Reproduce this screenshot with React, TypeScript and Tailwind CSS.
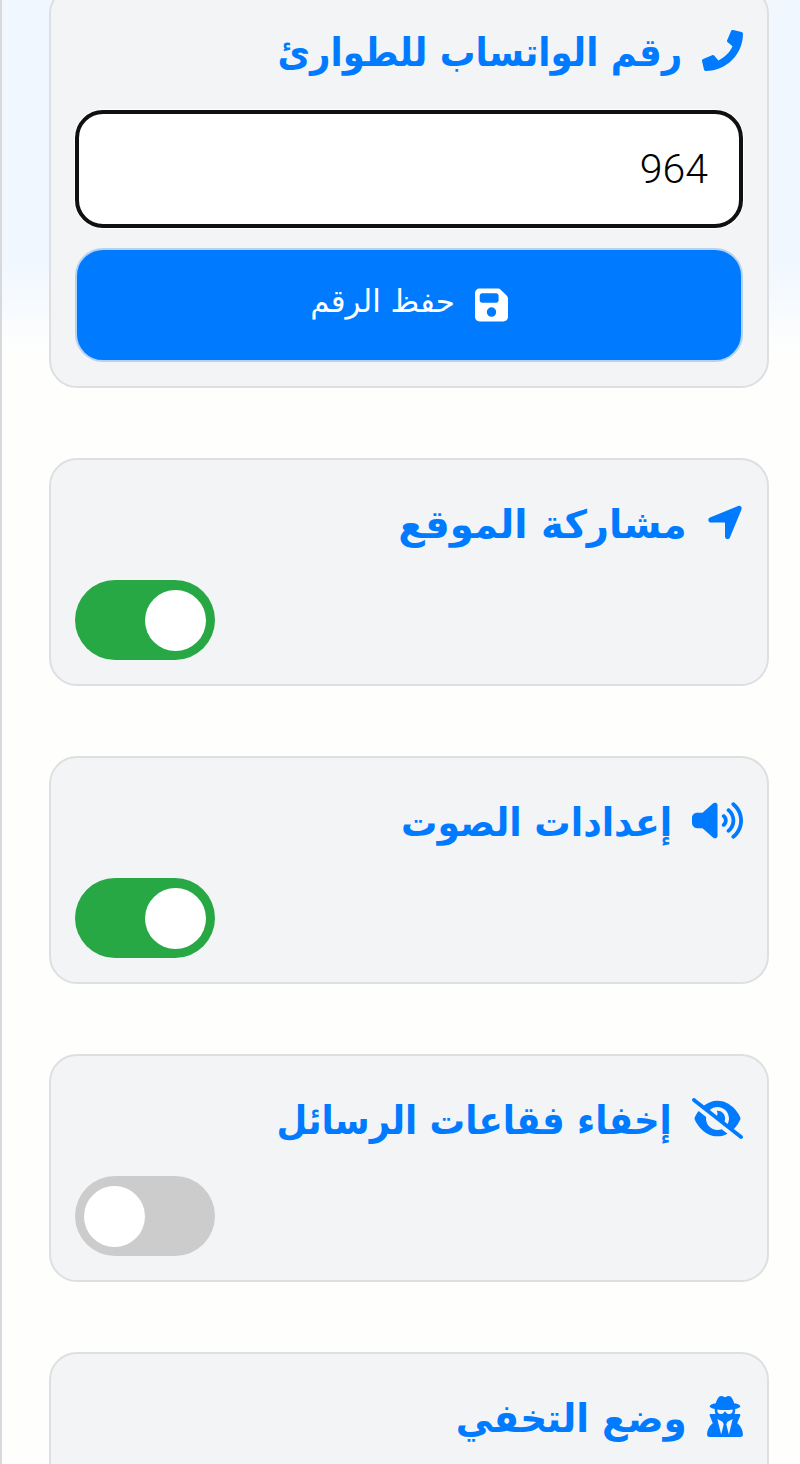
import { useState } from 'react'
import type { ReactNode } from 'react'
import clsx from 'clsx'
import { FaPhone } from 'react-icons/fa'
import { FaFloppyDisk, FaLocationArrow, FaUserSecret, FaVolumeHigh } from 'react-icons/fa6'

// eye-slash with the larger pupil
function EyeSlash({ className }: { className?: string }) {
  return (
    <svg viewBox="0 0 640 512" fill="currentColor" className={className}>
      <path d="M150.7 92.77C195 58.27 251.8 32 320 32C400.8 32 465.5 68.84 512.6 112.6C559.4 156 590.7 207.1 605.5 243.7C608.8 251.6 608.8 260.4 605.5 268.3C592.1 300.6 565.2 346.1 525.6 386.7L630.8 469.1C641.2 477.3 643.1 492.4 634.9 502.8C626.7 513.2 611.6 515.1 601.2 506.9L9.196 42.89C-1.236 34.71-3.065 19.63 5.112 9.196C13.29-1.236 28.37-3.065 38.81 5.112L150.7 92.77zM223.1 149.5L313.4 220.3C317.6 211.8 320 202.2 320 192C320 180.5 316.1 169.7 311.6 160.4C314.4 160.1 317.2 160 320 160C373 160 416 203 416 256C416 269.7 413.1 281.7 408.1 293.3L446.6 324.1C457.7 304.3 464 280.9 464 256C464 176.5 399.5 112 320 112C282.7 112 248.6 126.2 223.1 149.5zM320 480C239.2 480 174.5 443.2 127.4 399.4C80.62 356 49.34 304.9 34.46 268.3C31.18 260.4 31.18 251.6 34.46 243.7C44 220.8 60.29 191.2 83.09 161.5L177.4 235.8C176.5 242.4 176 249.1 176 256C176 335.5 240.5 400 320 400C338.7 400 356.6 396.4 373 389.9L446.2 447.5C409.9 467.1 367.8 480 320 480z" />
    </svg>
  )
}

const toggles = [
  {
    id: 'location',
    label: 'مشاركة الموقع',
    icon: <FaLocationArrow className="h-[41px] w-9" />,
    on: true,
    fit: 'scale-x-[0.989]',
  },
  {
    id: 'sound',
    label: 'إعدادات الصوت',
    icon: <FaVolumeHigh className="h-[41px] w-[51px]" />,
    on: true,
    fit: 'scale-x-[0.928]',
  },
  {
    id: 'bubbles',
    label: 'إخفاء فقاعات الرسائل',
    icon: <EyeSlash className="h-[41px] w-[51px]" />,
    on: false,
    fit: 'scale-x-[0.909]',
  },
  {
    id: 'stealth',
    label: 'وضع التخفي',
    icon: <FaUserSecret className="h-[41px] w-9" />,
    on: false,
    fit: 'scale-x-[0.956]',
  },
]

function Card({ children }: { children: ReactNode }) {
  return (
    <section className="shrink-0 rounded-[28px] border-2 border-[#dedfe0] bg-[#f2f4f6] p-6">{children}</section>
  )
}

function Title({ icon, label, fit }: { icon: ReactNode; label: string; fit: string }) {
  return (
    <h2 className="flex h-20 items-center gap-5 text-[39px] font-bold text-[#007bff]">
      <span className="-mt-[3px] shrink-0">{icon}</span>
      <span className={clsx('origin-right leading-none whitespace-nowrap', fit)}>{label}</span>
    </h2>
  )
}

function Toggle({ on, onClick }: { on: boolean; onClick: () => void }) {
  return (
    <button
      role="switch"
      aria-checked={on}
      dir="ltr"
      onClick={onClick}
      className={clsx(
        'flex h-20 w-[140px] items-center rounded-full px-[9px]',
        on ? 'justify-end bg-[#28a745]' : 'justify-start bg-[#ccc]',
      )}
    >
      <span className="size-[61px] rounded-full bg-white" />
    </button>
  )
}

export default function App() {
  const [number, setNumber] = useState('964')
  const [state, setState] = useState<Record<string, boolean>>(
    Object.fromEntries(toggles.map((t) => [t.id, t.on])),
  )

  return (
    <main
      dir="rtl"
      className="h-[1464px] w-[800px] overflow-hidden border-l-2 border-[#d8d9dc] bg-[#fefefd] bg-[linear-gradient(#f0f7ff_0px,#f0f7ff_260px,#fefefd_350px)] font-['DejaVu_Sans',sans-serif]"
    >
      <div className="-mt-3.5 flex flex-col gap-[70px] pr-[31px] pl-[47px]">
        <Card>
          <Title icon={<FaPhone className="size-[41px]" />} label="رقم الواتساب للطوارئ" fit="scale-x-[0.911]" />
          <input
            value={number}
            onChange={(e) => setNumber(e.target.value)}
            className="mt-[18px] block h-[118px] w-full rounded-[28px] border-4 border-[#101010] bg-white px-[31px] font-['Roboto',sans-serif] text-[41px] font-light text-black ring-1 ring-white outline-none"
          />
          <button className="mt-5 flex h-[114px] w-full items-center justify-center gap-5 rounded-[28px] border-2 border-[#b5d2f3] bg-[#007bff] text-[31px] text-white">
            <FaFloppyDisk className="h-[38px] w-[33px] shrink-0" />
            <span className="-mt-2 leading-none whitespace-nowrap">حفظ الرقم</span>
          </button>
        </Card>

        {toggles.map(({ id, label, icon, fit }) => (
          <Card key={id}>
            <Title icon={icon} label={label} fit={fit} />
            <div className="mt-4 flex justify-end">
              <Toggle on={state[id]} onClick={() => setState({ ...state, [id]: !state[id] })} />
            </div>
          </Card>
        ))}
      </div>
    </main>
  )
}
